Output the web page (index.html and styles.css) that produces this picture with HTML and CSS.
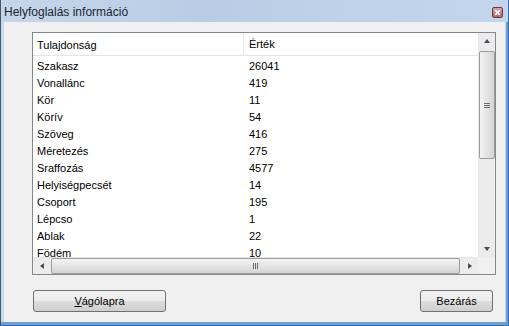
FILE: index.html
```html
<!DOCTYPE html>
<html lang="hu">
<head>
  <meta charset="UTF-8" />
  <title>Helyfoglalás információ</title>
  <link rel="stylesheet" href="styles.css">
</head>
<body>
  <div class="window">
    <div class="titlebar">
      <span class="title">Helyfoglalás információ</span>
      <span class="close-btn">
        <svg width="9" height="9" viewBox="0 0 9 9"><path d="M1.5 1.5 L7.5 7.5 M7.5 1.5 L1.5 7.5" stroke="#fff" stroke-width="2"/></svg>
      </span>
    </div>

    <div class="client">
      <div class="listview">
        <div class="list-main">
          <div class="list-header">
            <div class="col col-name">Tulajdonság</div>
            <div class="col col-value">Érték</div>
          </div>
          <div class="list-rows">
            <div class="row"><span class="col col-name">Szakasz</span><span class="col col-value">26041</span></div>
            <div class="row"><span class="col col-name">Vonallánc</span><span class="col col-value">419</span></div>
            <div class="row"><span class="col col-name">Kör</span><span class="col col-value">11</span></div>
            <div class="row"><span class="col col-name">Körív</span><span class="col col-value">54</span></div>
            <div class="row"><span class="col col-name">Szöveg</span><span class="col col-value">416</span></div>
            <div class="row"><span class="col col-name">Méretezés</span><span class="col col-value">275</span></div>
            <div class="row"><span class="col col-name">Sraffozás</span><span class="col col-value">4577</span></div>
            <div class="row"><span class="col col-name">Helyiségpecsét</span><span class="col col-value">14</span></div>
            <div class="row"><span class="col col-name">Csoport</span><span class="col col-value">195</span></div>
            <div class="row"><span class="col col-name">Lépcso</span><span class="col col-value">1</span></div>
            <div class="row"><span class="col col-name">Ablak</span><span class="col col-value">22</span></div>
            <div class="row"><span class="col col-name">Födém</span><span class="col col-value">10</span></div>
          </div>
        </div>

        <!-- vertical scrollbar -->
        <div class="vscroll">
          <div class="arrow"><span class="tri tri-up"></span></div>
          <div class="track">
            <div class="thumb thumb-v"><span class="grip-v"></span></div>
          </div>
          <div class="arrow"><span class="tri tri-down"></span></div>
        </div>

        <!-- horizontal scrollbar -->
        <div class="hscroll">
          <div class="arrow"><span class="tri tri-left"></span></div>
          <div class="track">
            <div class="thumb thumb-h"><span class="grip-h"></span></div>
          </div>
          <div class="arrow"><span class="tri tri-right"></span></div>
        </div>
        <div class="corner"></div>
      </div>

      <div class="buttons">
        <button class="btn btn-copy"><u>V</u>ágólapra</button>
        <button class="btn btn-close">Bezárás</button>
      </div>
    </div>
  </div>
</body>
</html>
```

FILE: styles.css
```css
body {
  margin: 0;
  font-family: 'Liberation Sans', Arial, sans-serif;
  font-size: 11px;
  color: #000;
  background: #f0f0f0;
}

.window {
  width: 509px;
  height: 326px;
  box-sizing: border-box;
  display: flex;
  flex-direction: column;
  border-left: 1px solid #44576c;
  border-right: 1px solid #2f6fae;
  border-bottom: 1px solid #2f6fae;
  background: #c9d9ec;
  box-shadow: inset -2px -3px 0 #6f9fd2;
  padding: 0 3px 3px 3px;
}

.titlebar {
  height: 22px;
  margin: 0 -3px;
  padding: 0 4px 0 3px;
  display: flex;
  align-items: center;
  justify-content: space-between;
  background: linear-gradient(to right, #c5d6eb, #b9cde6 40%, #c3d6ec);
}

.title {
  font-size: 12px;
  color: #1c2430;
  margin-top: 1px;
}

.close-btn {
  width: 11px;
  height: 11px;
  margin-top: 2px;
  margin-right: 1px;
  box-sizing: border-box;
  border: 1px solid #6b3a3a;
  border-radius: 2px;
  background: linear-gradient(#d9a0a0, #b86666);
  display: flex;
  align-items: center;
  justify-content: center;
}

.close-btn svg {
  width: 7px;
  height: 7px;
}

.client {
  flex: 1;
  background: #f0f0f0;
  padding: 10px 0 0 28px;
  display: flex;
  flex-direction: column;
}

.listview {
  width: 464px;
  height: 243px;
  box-sizing: border-box;
  border: 1px solid #828790;
  background: #fff;
  display: grid;
  grid-template-columns: 1fr 17px;
  grid-template-rows: 1fr 17px;
  overflow: hidden;
}

.list-main {
  overflow: hidden;
}

.list-header {
  height: 22px;
  display: flex;
  align-items: center;
  border-bottom: 1px solid #e5e5e5;
  background: #fff;
}

.list-header .col-name {
  border-right: 1px solid #e5e5e5;
  height: 22px;
  line-height: 24px;
  box-sizing: border-box;
}

.list-header .col-value {
  line-height: 24px;
}

.list-rows {
  padding-top: 2px;
}

.row {
  display: flex;
  height: 17px;
  line-height: 17px;
  white-space: nowrap;
}

.col {
  padding-left: 4px;
}

.col-name {
  width: 211px;
  box-sizing: border-box;
}

.col-value {
  padding-left: 5px;
}

/* scrollbars */
.vscroll,
.hscroll {
  display: flex;
  background: #ececec;
}

.vscroll {
  flex-direction: column;
  border-left: 1px solid #e6e6e6;
}

.hscroll {
  flex-direction: row;
  border-top: 1px solid #e6e6e6;
}

.corner {
  background: #f0f0f0;
}

.arrow {
  width: 17px;
  height: 17px;
  flex: none;
  display: flex;
  align-items: center;
  justify-content: center;
}

.vscroll .arrow {
  width: 16px;
}

.hscroll .arrow {
  height: 16px;
}

.tri {
  width: 0;
  height: 0;
  border: 3px solid transparent;
}

.tri-up {
  border-bottom: 4px solid #4d4d4d;
  border-top: 0;
  margin-top: -2px;
}

.tri-down {
  border-top: 4px solid #4d4d4d;
  border-bottom: 0;
}

.tri-left {
  border-right: 4px solid #4d4d4d;
  border-left: 0;
}

.tri-right {
  border-left: 4px solid #4d4d4d;
  border-right: 0;
}

.track {
  flex: 1;
  display: flex;
}

.vscroll .track {
  flex-direction: column;
}

.thumb {
  box-sizing: border-box;
  border: 1px solid #9d9d9d;
  border-radius: 2px;
  display: flex;
  align-items: center;
  justify-content: center;
}

.thumb-v {
  height: 108px;
  margin: 1px 0 0 0;
  width: 16px;
  background: linear-gradient(to right, #f4f4f4, #e4e4e4 50%, #d4d4d4);
}

.thumb-h {
  flex: 1;
  margin: 0 1px;
  height: 16px;
  background: linear-gradient(#f4f4f4, #e4e4e4 50%, #d4d4d4);
}

.grip-v {
  width: 6px;
  height: 5px;
  background: repeating-linear-gradient(#6c6c6c 0 1px, transparent 1px 2px);
}

.grip-h {
  width: 5px;
  height: 6px;
  background: repeating-linear-gradient(to right, #6c6c6c 0 1px, transparent 1px 2px);
}

/* buttons */
.buttons {
  display: flex;
  justify-content: space-between;
  margin-top: 15px;
  width: 461px;
}

.btn {
  height: 22px;
  font-family: 'Liberation Sans', Arial, sans-serif;
  font-size: 11px;
  color: #000;
  border: 1px solid #707070;
  border-radius: 3px;
  background: linear-gradient(#f2f2f2, #ebebeb 50%, #dddddd 50%, #cfcfcf);
  padding: 0;
}

.btn-copy {
  width: 133px;
  margin-left: 1px;
}

.btn-close {
  width: 73px;
}

.btn u {
  text-decoration: underline;
}
```
